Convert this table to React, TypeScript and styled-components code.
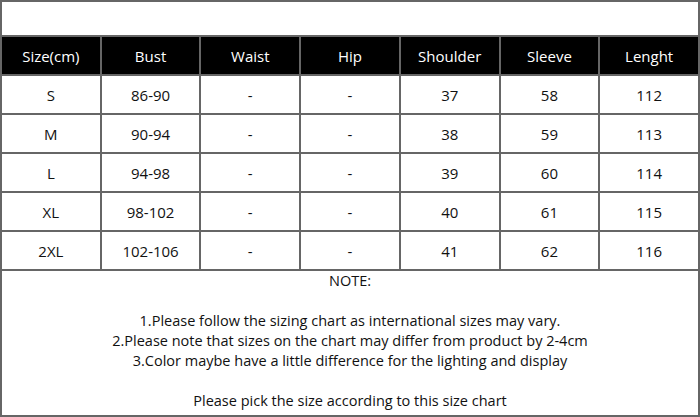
import React from 'react';
import styled, { createGlobalStyle } from 'styled-components';

const GlobalStyle = createGlobalStyle`
  html, body {
    margin: 0;
    padding: 0;
    background: #fff;
  }
  body {
    font-family: 'Open Sans', 'Noto Sans', sans-serif;
  }
`;

const Chart = styled.div`
  width: 700px;
  height: 417px;
  box-sizing: border-box;
  border: 2px solid #666;
  background: #666;
  display: grid;
  grid-template-columns: repeat(7, 1fr);
  grid-template-rows: 33px repeat(6, 37px) 1fr;
  gap: 2px;
`;

const TopBand = styled.div`
  grid-column: 1 / -1;
  background: #fff;
`;

const Cell = styled.div<{ $head?: boolean }>`
  display: flex;
  align-items: center;
  justify-content: center;
  font-size: 15px;
  background: ${(p) => (p.$head ? '#000' : '#fff')};
  color: ${(p) => (p.$head ? '#fff' : '#111')};
`;

const Notes = styled.div`
  grid-column: 1 / -1;
  background: #fff;
  display: flex;
  flex-direction: column;
  align-items: center;
  padding-top: 0px;
  font-size: 14.5px;
  line-height: 20px;
  color: #111;
`;

const Line = styled.div`
  height: 20px;
  white-space: nowrap;
`;

const headers = ['Size(cm)', 'Bust', 'Waist', 'Hip', 'Shoulder', 'Sleeve', 'Lenght'];

const rows = [
  ['S', '86-90', '-', '-', '37', '58', '112'],
  ['M', '90-94', '-', '-', '38', '59', '113'],
  ['L', '94-98', '-', '-', '39', '60', '114'],
  ['XL', '98-102', '-', '-', '40', '61', '115'],
  ['2XL', '102-106', '-', '-', '41', '62', '116'],
];

const notes = [
  'NOTE:',
  '',
  '1.Please follow the sizing chart as international sizes may vary.',
  '2.Please note that sizes on the chart may differ from product by 2-4cm',
  '3.Color maybe have a little difference for the lighting and display',
  '',
  'Please pick the size according to this size chart',
];

export default function App() {
  return (
    <>
      <GlobalStyle />
      <Chart>
        <TopBand />
        {headers.map((h) => (
          <Cell key={h} $head>
            {h}
          </Cell>
        ))}
        {rows.map((row, i) =>
          row.map((v, j) => <Cell key={`${i}-${j}`}>{v}</Cell>)
        )}
        <Notes>
          {notes.map((n, i) => (
            <Line key={i}>{n}</Line>
          ))}
        </Notes>
      </Chart>
    </>
  );
}
